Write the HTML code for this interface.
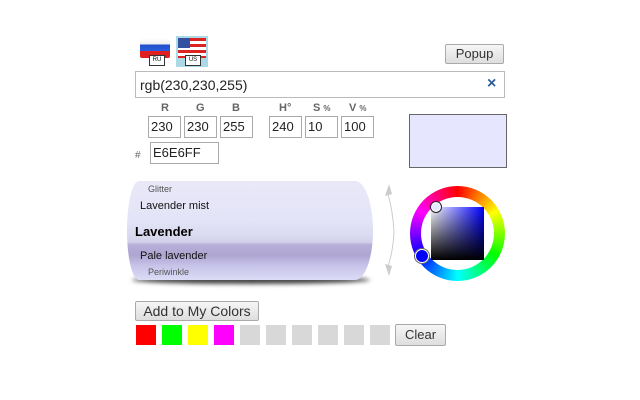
<!DOCTYPE html>
<html><head><style>
body{margin:0;width:640px;height:400px;background:#fff;font-family:"Liberation Sans",sans-serif;position:relative;overflow:hidden}
.a{position:absolute}
.in{position:absolute;border:1px solid #aaa;background:#fff;font-size:13px;color:#222;box-sizing:border-box;padding:2px 0 0 2px;height:22px}
.lb{position:absolute;top:102px;font-size:11px;font-weight:bold;color:#666}
.lb small{font-size:8px}
.btn{position:absolute;border:1px solid #aaa;border-radius:2px;background:linear-gradient(#f6f6f6,#dedede);font-size:13px;color:#333;text-align:center;box-sizing:border-box}
.sw{position:absolute;top:325px;width:20px;height:20px;background:#d8d8d8}
</style></head><body>
<div class="a" style="left:140px;top:38px;width:30px;height:20px;background:linear-gradient(#fff 0,#eee 33%,#2050c8 33%,#2a5ee0 66%,#e02020 66%);border-radius:2px"></div>
<div class="a" style="left:149px;top:55px;width:14px;height:9px;background:#fff;border:1px solid #333;font-size:6px;line-height:9px;text-align:center">RU</div>
<div class="a" style="left:176px;top:36px;width:32px;height:31px;background:#add8e6"></div>
<div class="a" style="left:178px;top:38px;width:28px;height:20px;background:repeating-linear-gradient(#d22 0,#d22 3px,#fff 3px,#fff 6px)"></div>
<div class="a" style="left:178px;top:38px;width:12px;height:10px;background:#3450a0"></div>
<div class="a" style="left:185px;top:55px;width:14px;height:9px;background:#fff;border:1px solid #333;font-size:6px;line-height:9px;text-align:center">US</div>
<div class="btn" style="left:445px;top:44px;width:59px;height:20px;line-height:18px">Popup</div>
<div class="in" style="left:135px;top:71px;width:370px;height:27px;font-size:14px;padding:5px 0 0 4px;border-color:#bbb">rgb(230,230,255)</div>
<div class="a" style="left:487px;top:75px;font-size:16px;font-weight:bold;color:#2a5d9a">×</div>
<div class="lb" style="left:161px">R</div>
<div class="lb" style="left:196px">G</div>
<div class="lb" style="left:232px">B</div>
<div class="lb" style="left:279px">H°</div>
<div class="lb" style="left:313px">S <small>%</small></div>
<div class="lb" style="left:349px">V <small>%</small></div>
<div class="in" style="left:148px;top:116px;width:33px">230</div>
<div class="in" style="left:184px;top:116px;width:33px">230</div>
<div class="in" style="left:220px;top:116px;width:33px">255</div>
<div class="in" style="left:269px;top:116px;width:33px">240</div>
<div class="in" style="left:305px;top:116px;width:33px">10</div>
<div class="in" style="left:341px;top:116px;width:33px">100</div>
<div class="a" style="left:135px;top:150px;font-size:10px;color:#666">#</div>
<div class="in" style="left:150px;top:142px;width:69px">E6E6FF</div>
<div class="a" style="left:409px;top:114px;width:96px;height:52px;background:#e6e6ff;border:1px solid #666"></div>
<div class="a" style="left:132px;top:276px;width:238px;height:8px;border-radius:50%;background:#444;filter:blur(2px)"></div>
<div class="a" style="left:127px;top:181px;width:246px;height:99px;border-radius:12px 18px 18px 12px / 50px;overflow:hidden;background:linear-gradient(#e8e8f8 0,#e4e4f8 40%,#dadaf0 55%,#d0d0ea 62%,#b8b0d8 64%,#aea6d2 75%,#c6c2e8 85%,#dcdcf6 100%)">
<div class="a" style="left:21px;top:3px;font-size:9px;color:#555">Glitter</div>
<div class="a" style="left:13px;top:19px;font-size:11px;color:#111">Lavender mist</div>
<div class="a" style="left:8px;top:43px;font-size:13px;font-weight:bold;color:#000">Lavender</div>
<div class="a" style="left:13px;top:69px;font-size:11px;color:#111">Pale lavender</div>
<div class="a" style="left:21px;top:86px;font-size:9px;color:#555">Periwinkle</div>
</div>
<svg class="a" style="left:380px;top:182px" width="20" height="98"><path d="M9 2 L5 14 L12 12 Z" fill="#ccc"/><path d="M8 12 Q13 30 14 50" stroke="#ccc" fill="none"/><path d="M14 50 Q13 70 8 84" stroke="#ccc" fill="none"/><path d="M9 94 L5 82 L12 84 Z" fill="#ccc"/></svg>
<div class="a" style="left:410px;top:186px;width:95px;height:95px;border-radius:50%;background:conic-gradient(red,#ff0 60deg,#0f0 120deg,#0ff 180deg,#00f 240deg,#f0f 300deg,red)"></div>
<div class="a" style="left:421px;top:197px;width:73px;height:73px;border-radius:50%;background:#fff"></div>
<div class="a" style="left:431px;top:207px;width:53px;height:53px;background:linear-gradient(transparent,#000),linear-gradient(90deg,#fff,#00f)"></div>
<div class="a" style="left:430px;top:201px;width:10px;height:10px;border-radius:50%;border:1px solid #222;box-shadow:0 0 0 1px #fff inset;background:#e6e6ff"></div>
<div class="a" style="left:415px;top:249px;width:12px;height:12px;border-radius:50%;background:#00f;border:1px solid #fff;box-shadow:0 0 0 1px #666"></div>
<div class="btn" style="left:135px;top:301px;width:124px;height:20px;line-height:18px;font-size:14px">Add to My Colors</div>
<div class="sw" style="left:136px;background:#f00"></div>
<div class="sw" style="left:162px;background:#0f0"></div>
<div class="sw" style="left:188px;background:#ff0"></div>
<div class="sw" style="left:214px;background:#f0f"></div>
<div class="sw" style="left:240px"></div>
<div class="sw" style="left:266px"></div>
<div class="sw" style="left:292px"></div>
<div class="sw" style="left:318px"></div>
<div class="sw" style="left:344px"></div>
<div class="sw" style="left:370px"></div>
<div class="btn" style="left:395px;top:324px;width:51px;height:22px;line-height:20px;font-size:13px">Clear</div>
</body></html>
